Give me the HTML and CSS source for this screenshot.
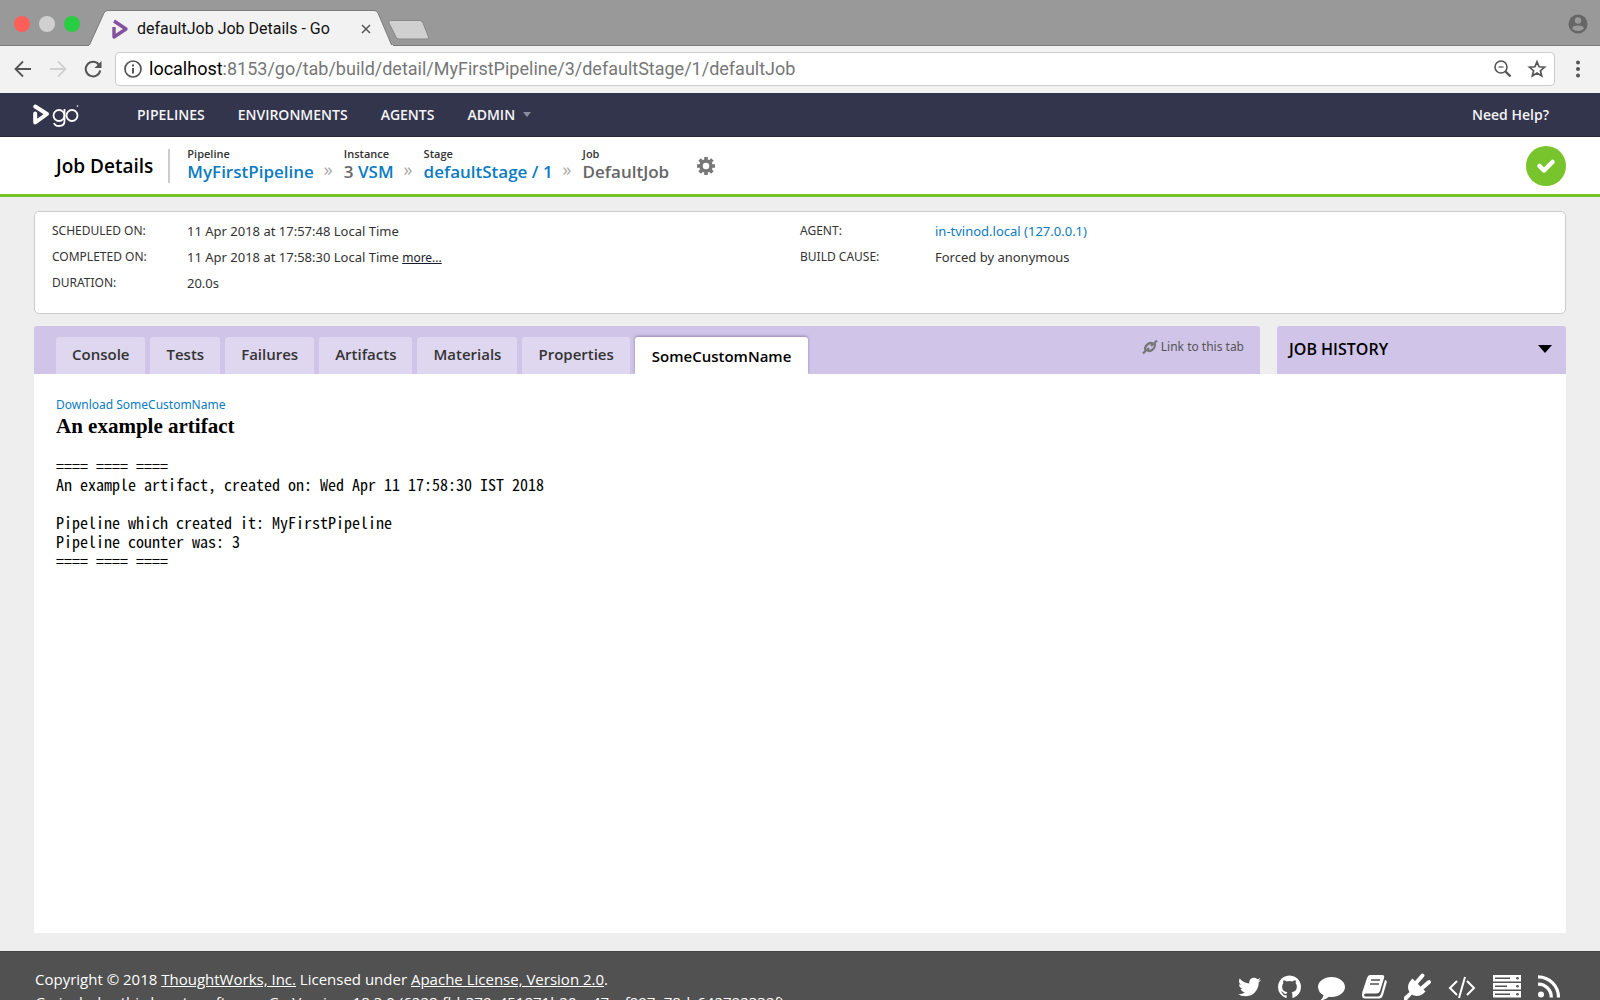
FILE: index.html
```html
<!DOCTYPE html>
<html lang="en">
<head>
<meta charset="utf-8">
<title>defaultJob Job Details - Go</title>
<meta name="viewport" content="width=device-width, initial-scale=1">
<link rel="stylesheet" href="styles.css">
</head>
<body>
<div class="titlebar">
  <div class="lights"><span class="light red"></span><span class="light grey"></span><span class="light green"></span></div>
  <div class="tab">
    <svg class="tab-shape" viewBox="0 0 304 36" preserveAspectRatio="none" aria-hidden="true"><path d="M0 36L15 3Q16 .5 19 .5H285Q288 .5 289 3L303 36Z" fill="#f2f2f2" stroke="#7b7b7b"/><path d="M0 36H304" stroke="#f2f2f2" stroke-width="2"/></svg>
    <svg class="favicon" viewBox="0 0 16 20" aria-hidden="true"><path d="M2 8V18L14 10L2 2" fill="none" stroke="#84519f" stroke-width="3.400" stroke-linejoin="round" stroke-linecap="butt"/></svg>
    <span class="tab-title">defaultJob Job Details - Go</span>
    <button class="tab-close" aria-label="Close tab"><svg viewBox="0 0 10 10"><path d="M1 1L9 9M9 1L1 9" stroke="#555" stroke-width="1.5"/></svg></button>
  </div>
  <button class="new-tab" aria-label="New tab"><svg viewBox="0 0 42 20"><path d="M4 .5H32Q34 .5 35 3L40.500 17Q41 19 39 19H11Q9 19 8 17L1 3Q0 .5 4 .5Z" fill="#d0d0d0" stroke="#888"/></svg></button>
  <button class="profile" aria-label="Profile"><svg viewBox="0 0 20 20"><circle cx="10" cy="10" r="9.500" fill="#666"/><circle cx="10" cy="6.500" r="3.200" fill="#999"/><path d="M4 14.500Q4.500 11.500 10 11.500T16 14.500Q13.500 17 10 17T4 14.500Z" fill="#999"/></svg></button>
</div>
<div class="toolbar">
  <button class="tool" aria-label="Back"><svg viewBox="0 0 18 18"><path d="M17 9H2M9 1.500L1.500 9L9 16.500" fill="none" stroke="#555" stroke-width="1.800"/></svg></button>
  <button class="tool" aria-label="Forward"><svg viewBox="0 0 18 18"><path d="M1 9H16M9 1.500L16.500 9L9 16.500" fill="none" stroke="#d0d0d0" stroke-width="1.800"/></svg></button>
  <button class="tool" aria-label="Reload"><svg viewBox="0 0 18 18"><path d="M14.800 4.600A7.300 7.300 0 1 0 16.200 10.500" fill="none" stroke="#555" stroke-width="2"/><path d="M17.500 1V8H10.500Z" fill="#555"/></svg></button>
  <div class="address">
    <svg class="info" viewBox="0 0 18 18" aria-hidden="true"><circle cx="9" cy="9" r="8" fill="none" stroke="#555" stroke-width="1.700"/><path d="M9 8V13.500M9 4.500V6.500" stroke="#555" stroke-width="2"/></svg>
    <div class="url"><span class="host">localhost</span>:8153/go/tab/build/detail/MyFirstPipeline/3/defaultStage/1/defaultJob</div>
    <button class="tool" aria-label="Zoom"><svg viewBox="0 0 18 18"><circle cx="7" cy="7" r="6" fill="none" stroke="#555" stroke-width="1.600"/><path d="M4.500 7H9.500" stroke="#777" stroke-width="1.500"/><path d="M11.500 11.500L16.500 16.500" stroke="#555" stroke-width="2.400"/></svg></button>
    <button class="tool" aria-label="Bookmark"><svg viewBox="0 0 18 18"><path d="M9 1.800L11.100 6.800L16.500 7.200L12.400 10.700L13.700 16L9 13.100L4.300 16L5.600 10.700L1.500 7.200L6.900 6.800Z" fill="none" stroke="#555" stroke-width="1.700"/></svg></button>
  </div>
  <button class="menu" aria-label="Menu"><svg viewBox="0 0 4 18"><g fill="#555"><circle cx="2" cy="2.500" r="2"/><circle cx="2" cy="9" r="2"/><circle cx="2" cy="15.500" r="2"/></g></svg></button>
</div>

<header class="nav">
  <a class="brand" href="#" aria-label="go">
    <svg viewBox="0 0 46 22" aria-hidden="true"><path d="M2.200 9.500V18.500L14 10L2.200 2.500" fill="none" stroke="#fff" stroke-width="4" stroke-linejoin="round" stroke-linecap="round"/><g fill="none" stroke="#fff" stroke-width="1.800"><circle cx="26" cy="11.500" r="5.500"/><path d="M31.500 5V17Q31.500 22 26 22Q22 22 21 19"/><circle cx="39" cy="11.500" r="5.500"/></g><circle cx="44.500" cy="2" r=".8" fill="#fff"/></svg>
  </a>
  <nav class="links">
    <a href="#">PIPELINES</a><a href="#">ENVIRONMENTS</a><a href="#">AGENTS</a><a href="#">ADMIN<span class="caret"></span></a>
  </nav>
  <a class="help" href="#">Need Help?</a>
</header>

<div class="crumbs">
  <h1>Job Details</h1>
  <ol>
    <li><span class="label">Pipeline</span><a href="#">MyFirstPipeline</a></li>
    <li><span class="label">Instance</span>3 <a href="#">VSM</a></li>
    <li><span class="label">Stage</span><a href="#">defaultStage / 1</a></li>
    <li><span class="label">Job</span>DefaultJob</li>
  </ol>
  <button class="gear" aria-label="Settings"><svg viewBox="0 0 18 18"><g stroke="#777" stroke-width="3.600"><path d="M9 0V18M0 9H18M2.600 2.600L15.400 15.400M15.400 2.600L2.600 15.400"/></g><circle cx="9" cy="9" r="5" fill="#fff" stroke="#777" stroke-width="3.500"/></svg></button>
  <span class="passed" role="img" aria-label="Passed"><svg viewBox="0 0 20 16"><path d="M3.500 8L8 12.500L16.500 4" fill="none" stroke="#fff" stroke-width="4.500" stroke-linecap="round" stroke-linejoin="round"/></svg></span>
</div>

<main>
  <section class="summary">
    <dl>
      <dt>SCHEDULED ON:</dt><dd>11 Apr 2018 at 17:57:48 Local Time</dd>
      <dt>COMPLETED ON:</dt><dd>11 Apr 2018 at 17:58:30 Local Time <a class="more" href="#">more...</a></dd>
      <dt>DURATION:</dt><dd>20.0s</dd>
    </dl>
    <dl>
      <dt>AGENT:</dt><dd><a href="#">in-tvinod.local (127.0.0.1)</a></dd>
      <dt>BUILD CAUSE:</dt><dd>Forced by anonymous</dd>
    </dl>
  </section>
  <div class="bars">
    <div class="tabs">
      <a href="#">Console</a><a href="#">Tests</a><a href="#">Failures</a><a href="#">Artifacts</a><a href="#">Materials</a><a href="#">Properties</a><a class="current" href="#">SomeCustomName</a>
      <a class="permalink" href="#"><svg viewBox="0 0 14 14" aria-hidden="true"><g fill="none" stroke="#777" stroke-width="2.200"><path d="M0 13.500L2.500 11Q1 7 5 4Q8 2 10 4L8 6"/><path d="M14 .5L11.500 3Q13 7 9 10Q6 12 4 10L6 8"/></g></svg>Link to this tab</a>
    </div>
    <button class="history">JOB HISTORY<span class="arrow"></span></button>
  </div>
  <section class="artifact">
    <a href="#">Download SomeCustomName</a>
    <h2>An example artifact</h2>
<pre>==== ==== ====
An example artifact, created on: Wed Apr 11 17:58:30 IST 2018

Pipeline which created it: MyFirstPipeline
Pipeline counter was: 3
==== ==== ====</pre>
  </section>
</main>

<footer>
  <div class="legal">
    <p>Copyright © 2018 <a href="#">ThoughtWorks, Inc.</a> Licensed under <a href="#">Apache License, Version 2.0</a>.</p>
    <p>Go includes third-party software. Go Version: 18.3.0 (6228-fbb379c451871b20ac47acf997a78dc642792332f).</p>
  </div>
  <div class="social">
    <a href="#" aria-label="Twitter"><svg width="23" height="24" viewBox="40 0 1580 1536" ><g transform="matrix(1 0 0 -1 0 1408)"><path d="M1620 1128q-67 -98 -162 -167q1 -14 1 -42q0 -130 -38 -259.500t-115.500 -248.500t-184.500 -210.500t-258 -146t-323 -54.500q-271 0 -496 145q35 -4 78 -4q225 0 401 138q-105 2 -188 64.500t-114 159.500q33 -5 61 -5q43 0 85 11q-112 23 -185.500 111.500t-73.500 205.500v4q68 -38 146 -41q-66 44 -105 115t-39 154q0 88 44 163q121 -149 294.500 -238.500t371.500 -99.500q-8 38 -8 74q0 134 94.500 228.500t228.500 94.500q140 0 236 -102q109 21 205 78q-37 -115 -142 -178q93 10 186 50z"/></g></svg></a>
    <a href="#" aria-label="GitHub"><svg width="23" height="24" viewBox="128 128 1536 1536"><path d="M896 128q209 0 385.500 103t279.500 279.500 103 385.500q0 251-146.500 451.500t-378.500 277.500q-27 5-40-7t-13-30q0-3 .5-76.500t.5-134.500q0-97-52-142 57-6 102.500-18t94-39 81-66.500 53-105 20.500-150.500q0-119-79-206 37-91-8-204-28-9-81 11t-92 44l-38 24q-93-26-192-26t-192 26q-16-11-42.500-27t-83.500-38.500-85-13.500q-45 113-8 204-79 87-79 206 0 85 20.500 150t52.500 105 80.500 67 94 39 102.500 18q-39 36-49 103-21 10-45 15t-57 5-65.500-21.500-55.500-62.500q-19-32-48.500-52t-49.500-24l-20-3q-21 0-29 4.500t-5 11.500 9 14 13 12l7 5q22 10 43.500 38t31.500 51l10 23q13 38 44 61.500t67 30 69.500 7 55.500-3.500l23-4q0 38 .5 88.500t.5 54.500q0 18-13 30t-40 7q-232-77-378.500-277.500t-146.500-451.500q0-209 103-385.500t279.500-279.500 385.500-103z"/></svg></a>
    <a href="#" aria-label="Chat"><svg width="27" height="24" viewBox="0 0 27 24"><path d="M13.500 2C21 2 27 6.500 27 12S21 22 13.500 22Q12 22 11 21.800Q7 25 2 25.500Q5 23.500 5.500 20.200Q0 17 0 12C0 6.500 6 2 13.500 2Z"/></svg></a>
    <a href="#" aria-label="Documentation"><svg width="25" height="24" viewBox="0 0 25 24"><path d="M8 0H20Q23 0 22 3L18 16Q17 18.500 14 18.500H4Q2 18.500 2 20T4 21.500H16Q18 21.500 19 19L23 5Q25.500 5.500 24.500 8L21 20Q20 23.500 17 23.500H3Q0 23.500 0 20Q0 17 1 15L5 3Q6 0 8 0Z"/><path d="M9 5H18M8 9H17" stroke="#515151" stroke-width="1.600"/></svg></a>
    <a href="#" aria-label="Plugins"><svg width="27" height="24" viewBox="0 2 27 24"><path d="M8.500 5.500L21.500 18.500C17 23.500 12 24 8 21.500L3 27H0V24L5.500 19C3 15 3.500 10 8.500 5.500Z"/><path d="M12 10L18.500 2.500M17.500 15.500L25 9" stroke="#fff" stroke-width="4" stroke-linecap="round"/></svg></a>
    <a href="#" aria-label="API"><svg width="28" height="24" viewBox="0 0 28 24"><path d="M9 6L2 13L9 20M19 6L26 13L19 20M17 2L11 23" fill="none" stroke="#fff" stroke-width="2"/></svg></a>
    <a href="#" aria-label="Server"><svg width="28" height="24" viewBox="0 0 28 24"><path d="M0 0H28V6.500H0ZM0 8H28V14.500H0ZM0 16H28V22.500H0Z"/><path d="M2 3.200H17M2 11.200H14M2 19.200H17" stroke="#515151" stroke-width="1.600"/><g fill="#515151"><circle cx="24.500" cy="3.200" r="1.300"/><circle cx="24.500" cy="11.200" r="1.300"/><circle cx="24.500" cy="19.200" r="1.300"/></g></svg></a>
    <a href="#" aria-label="Feed"><svg width="22" height="24" viewBox="0 0 22 24"><circle cx="3" cy="19.500" r="3"/><path d="M0 9.200A13 13 0 0 1 13.300 22.500M0 1.800A20.500 20.500 0 0 1 20.500 22.500" fill="none" stroke="#fff" stroke-width="3.200"/></svg></a>
  </div>
</footer>
</body>
</html>
```
FILE: styles.css
```css
* { box-sizing: border-box; }
html, body { height: 100%; }
body {
  margin: 0;
  display: flex;
  flex-direction: column;
  overflow: hidden;
  background: #eee;
  color: #333;
  font: 14px/20px "Open Sans", sans-serif;
}
a { color: #0b7bc2; text-decoration: none; }
button { border: 0; padding: 0; background: none; font: inherit; color: inherit; }
svg { display: block; overflow: visible; }
h1, h2, p, ol, dl, dd, pre { margin: 0; padding: 0; }

/* browser window */
.titlebar {
  flex: none;
  display: flex;
  height: 46px;
  padding: 0 12px 0 14px;
  background: #999;
  box-shadow: inset 0 -1px #7b7b7b;
}
.lights { display: flex; gap: 9px; padding-top: 16px; width: 75px; }
.light { width: 16px; height: 16px; border-radius: 50%; }
.red { background: #ff5f57; }
.grey { background: #d0d0d0; }
.green { background: #28cd41; }
.tab {
  position: relative;
  display: flex;
  align-items: center;
  width: 304px;
  height: 36px;
  margin-top: 10px;
  padding: 2px 22px 0 23px;
  color: #111;
  font: 16px/20px Roboto, sans-serif;
}
.tab-shape { position: absolute; inset: 0; width: 100%; height: 100%; }
.favicon { position: relative; width: 16px; height: 20px; margin-right: 9px; }
.tab-title { position: relative; flex: 1; }
.tab-close { position: relative; width: 10px; }
.new-tab { align-self: flex-start; width: 42px; margin-top: 20px; margin-left: -5px; }
.profile { align-self: flex-start; width: 20px; margin: 14px 0 0 auto; }
.toolbar {
  flex: none;
  display: flex;
  align-items: center;
  gap: 17px;
  height: 47px;
  padding: 0 20px 1px 14px;
  background: #f2f2f2;
}
.tool { flex: none; width: 18px; }
.address {
  flex: 1;
  display: flex;
  align-items: center;
  gap: 16px;
  height: 34px;
  margin: 0 4px 0 -4px;
  padding: 0 8px;
  border: 1px solid #ccc;
  border-radius: 4px;
  background: #fff;
}
.info { width: 18px; margin-right: -9px; }
.url { flex: 1; color: #777; font: 18px/24px Roboto, sans-serif; white-space: nowrap; }
.host { color: #000; }
.menu { width: 4px; }

/* site navigation */
.nav {
  flex: none;
  display: flex;
  align-items: center;
  height: 44px;
  padding: 0 51px 0 33px;
  background: #33354c;
  border-bottom: 1px solid #26283a;
  font-weight: 600;
}
.nav a { color: #f4f4f6; }
.brand { width: 46px; margin-right: 58px; }
.links { display: flex; gap: 33px; flex: 1; }
.caret {
  display: inline-block;
  margin: 0 0 3px 8px;
  border: 4px solid transparent;
  border-top: 5px solid #8c8d9b;
  border-bottom: 0;
}

.crumbs {
  flex: none;
  display: flex;
  align-items: center;
  height: 60px;
  padding: 0 34px 0 56px;
  background: #fff;
  border-bottom: 3px solid #74c425;
}
h1 {
  padding-right: 15px;
  border-right: 2px solid #ccc;
  color: #000;
  font-size: 19px;
  font-weight: 600;
  line-height: 34px;
}
ol { display: flex; margin-left: 17px; padding-bottom: 4px; list-style: none; }
.crumbs li { color: #666; font-size: 17px; font-weight: 600; line-height: 20px; }
.crumbs li + li { padding-left: 30px; position: relative; }
.crumbs li + li::before {
  content: "»";
  position: absolute;
  left: 10px;
  top: 13px;
  color: #aaa;
  font-size: 18px;
  font-weight: 400;
}
.label { display: block; color: #333; font-size: 11px; line-height: 16px; }
.gear { width: 18px; margin-left: 28px; }
.passed {
  display: grid;
  place-items: center;
  width: 40px;
  height: 40px;
  margin-left: auto;
  border-radius: 50%;
  background: #78c42c;
}
.passed svg { width: 20px; }

/* page body */
main { flex: none; padding: 14px 34px 18px; }
.summary {
  display: grid;
  grid-template-columns: 1fr 1fr;
  min-height: 103px;
  margin-bottom: 12px;
  padding: 6px 17px;
  border: 1px solid #ccc;
  border-radius: 5px;
  background: #fff;
  font-family: "Noto Sans", sans-serif;
}
dl { display: grid; grid-template-columns: 135px 1fr; grid-auto-rows: 26px; }
dt { font-size: 12px; line-height: 25px; }
dd { font-size: 13px; line-height: 26px; }
.more { color: #1a1a2e; font-size: 12px; text-decoration: underline; }
.bars { display: grid; grid-template-columns: 1fr 289px; gap: 17px; }
.tabs, .history { height: 48px; border-radius: 3px 3px 0 0; background: #d0c4e8; }
.tabs { display: flex; align-items: flex-end; gap: 5px; padding-left: 22px; }
.tabs a {
  height: 37px;
  padding: 0 16px;
  border-radius: 3px 3px 0 0;
  background: #dfd7ef;
  color: #333;
  font-size: 15px;
  font-weight: 600;
  line-height: 35px;
}
.tabs .current {
  padding: 0 17px;
  background: #fff;
  box-shadow: 0 -1px 3px rgba(60, 40, 100, .4);
  clip-path: inset(-4px -4px 0 -4px);
  color: #000;
  line-height: 38px;
}
.tabs .permalink {
  display: flex;
  align-self: flex-start;
  align-items: center;
  gap: 4px;
  height: 42px;
  margin-left: auto;
  background: none;
  color: #555;
  font: 12px/20px "Noto Sans", sans-serif;
}
.permalink svg { width: 14px; }
.history {
  display: flex;
  align-items: center;
  justify-content: space-between;
  padding: 0 14px 3px 12px;
  color: #000;
  font-size: 16px;
  font-weight: 600;
}
.arrow { border: 7px solid transparent; border-top: 8px solid #000; border-bottom: 0; }
.artifact {
  min-height: 559px;
  padding: 21px 22px;
  background: #fff;
  font: 12px/20px "Noto Sans", sans-serif;
}
h2 {
  margin-bottom: 19px;
  color: #000;
  font: bold 21px/22px "Liberation Serif", serif;
}
pre { color: #000; font: 16px/19px "Noto Sans Mono CJK SC", "Liberation Mono", monospace; }

footer {
  flex: 1 0 80px;
  display: flex;
  justify-content: space-between;
  align-items: flex-start;
  padding: 16px 40px 0 35px;
  border-top: 1px solid #444;
  background: #515151;
  color: #fff;
  font-size: 15px;
  line-height: 23px;
}
.legal a { color: #fff; text-decoration: underline; }
.social { display: flex; align-items: flex-start; gap: 17px; padding-top: 7px; }
.social svg { fill: #fff; }
```
